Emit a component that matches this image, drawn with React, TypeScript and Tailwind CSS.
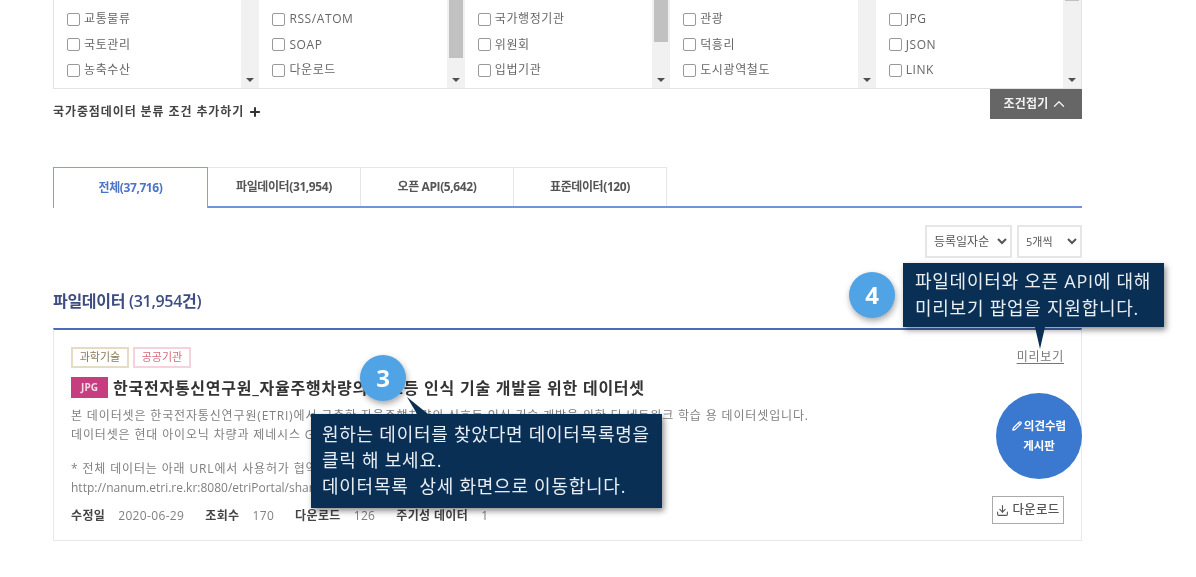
import { ChevronUp, Download, Pencil, Plus } from "lucide-react";

const filterColumns = [
  { items: ["교통물류", "국토관리", "농축수산"], thumb: "" },
  { items: ["RSS/ATOM", "SOAP", "다운로드"], thumb: "h-[58px]" },
  { items: ["국가행정기관", "위원회", "입법기관"], thumb: "h-[42px]" },
  { items: ["관광", "덕흥리", "도시광역철도"], thumb: "" },
  { items: ["JPG", "JSON", "LINK"], thumb: "h-[1px]" },
];

const tabs = ["파일데이터(31,954)", "오픈 API(5,642)", "표준데이터(120)"];

const FilterColumn = ({ items, thumb }: { items: string[]; thumb: string }) => (
  <div className="flex flex-1 h-full">
    <div className="flex-1 flex flex-col justify-end pl-[13px] pb-[5px] overflow-hidden">
      {["", ...items].map((item, i) => (
        <label key={i} className="flex items-center gap-[4px] h-[25.5px] shrink-0 text-[12px] tracking-[0.6px] text-[#666]">
          <span className="w-[13px] h-[13px] border border-[#999] rounded-[2px] bg-white shrink-0" />
          {item}
        </label>
      ))}
    </div>
    <div className="w-[18px] bg-[#f1f1f1] flex flex-col justify-between items-center">
      <div className={`w-[14px] bg-[#c1c1c1] ${thumb}`} />
      <div className="w-0 h-0 mb-[6px] border-x-[4px] border-x-transparent border-t-[4px] border-t-[#505050]" />
    </div>
  </div>
);

const Callout = ({ className, children }: { className: string; children: React.ReactNode }) => (
  <div className={`absolute bg-[#0a2f55] text-[#e8edf2] text-[18px] tracking-[0.75px] shadow-[2px_3px_6px_rgba(0,0,0,0.45)] ${className}`}>
    {children}
  </div>
);

const StepBadge = ({ className, step }: { className: string; step: string }) => (
  <div
    className={`absolute w-[46px] h-[46px] rounded-full bg-[#50a4e6] text-white text-[24px] font-bold flex items-center justify-center shadow-[1px_3px_6px_rgba(0,0,0,0.35)] ${className}`}
  >
    {step}
  </div>
);

export default function App() {
  return (
    <div className="relative w-[1196px] h-[577px] overflow-hidden bg-white blur-[0.5px] font-['Open_Sans','Noto_Sans_CJK_KR',sans-serif]">
      <div className="ml-[53px] w-[1029px]">
        <div className="flex h-[89px] overflow-hidden border-b border-x border-[#e3e3e3] border-t-0">
          {filterColumns.map((col) => (
            <FilterColumn key={col.items[0]} items={col.items} thumb={col.thumb} />
          ))}
        </div>

        <div className="flex items-start justify-between h-[78px]">
          <div className="flex items-center gap-[4px] mt-[14px] text-[12px] tracking-[0.9px] font-bold text-[#444]">
            국가중점데이터 분류 조건 추가하기
            <Plus size={14} strokeWidth={3.5} className="text-[#333]" />
          </div>
          <button className="w-[92px] h-[30px] bg-[#666666] text-[#f2f2f2] text-[12px] tracking-[0.2px] font-bold flex items-center justify-center gap-[2px]">
            조건접기
            <ChevronUp size={18} strokeWidth={1.75} />
          </button>
        </div>

        <div className="flex h-[41px] border-b-2 border-b-[#6f93e0]">
          <div className="relative w-[155px] h-[41px] bg-white border-x border-t border-[#7ea3dd] text-[#4a74c8] text-[12px] font-bold tracking-[-0.4px] flex items-center justify-center">
            전체(37,716)
          </div>
          {tabs.map((tab) => (
            <div
              key={tab}
              className="w-[153px] border-t border-r border-[#e6e6e6] text-[12px] font-bold tracking-[-0.4px] text-[#555] flex items-center justify-center"
            >
              {tab}
            </div>
          ))}
        </div>

        <div className="flex justify-end gap-[5px] mt-[17px]">
          <select className="w-[87px] h-[33px] border-2 border-[#e6e6e6] bg-white text-[12px] text-[#555] pl-[3px]">
            <option>등록일자순</option>
          </select>
          <select className="w-[65px] h-[33px] border-2 border-[#e6e6e6] bg-white text-[11px] text-[#555] pl-[3px]">
            <option>5개씩</option>
          </select>
        </div>

        <h2 className="mt-[32px] h-[22px] leading-[22px] text-[16px] font-semibold text-[#3d4d80] tracking-[-0.3px]">
          파일데이터 (31,954건)
        </h2>

        <div className="relative mt-[16px] h-[213px] border-t-2 border-t-[#4b6cb7] border-x border-b border-x-[#e8e8e8] border-b-[#e8e8e8] flex justify-between pl-[17px] pr-[17px]">
          <div className="flex flex-col">
            <div className="flex gap-[4px] mt-[17px]">
              <span className="w-[58px] h-[21px] border-2 border-[#e6dcc4] text-[#8a7a55] text-[11px] flex items-center justify-center">
                과학기술
              </span>
              <span className="w-[58px] h-[21px] border-2 border-[#f5d3da] text-[#d66a7c] text-[11px] flex items-center justify-center">
                공공기관
              </span>
            </div>
            <div className="flex items-center gap-[5px] mt-[9px] h-[21px]">
              <span className="w-[37px] h-[21px] bg-[#c63d80] text-[#f4d9e6] text-[10px] font-bold flex items-center justify-center">
                JPG
              </span>
              <span className="text-[16px] font-bold text-[#333] tracking-[0.75px] whitespace-nowrap">
                한국전자통신연구원_자율주행차량의 신호등 인식 기술 개발을 위한 데이터셋
              </span>
            </div>
            <div className="mt-[9px] text-[12px] tracking-[0.85px] leading-[18.5px] text-[#808080] whitespace-nowrap">
              <p>본 데이터셋은 한국전자통신연구원(ETRI)에서 구축한 자율주행차량의 신호등 인식 기술 개발을 위한 딥 네트워크 학습 용 데이터셋입니다.</p>
              <p>데이터셋은 현대 아이오닉 차량과 제네시스 G80 차량으로 수집한 도로 주행 영상으로 구성되어 있습니다.</p>
              <p className="h-[16px]" />
              <p>* 전체 데이터는 아래 URL에서 사용허가 협약 후 다운로드 할 수 있습니다.</p>
              <p className="tracking-[0px]">http://nanum.etri.re.kr:8080/etriPortal/share/</p>
            </div>
            <div className="flex items-center mt-[10px] text-[12px] tracking-[0.35px] text-[#808080]">
              <b className="text-[#444] mr-[13px]">수정일</b>
              <span className="mr-[21px]">2020-06-29</span>
              <b className="text-[#444] mr-[13px]">조회수</b>
              <span className="mr-[21px]">170</span>
              <b className="text-[#444] mr-[13px]">다운로드</b>
              <span className="mr-[21px]">126</span>
              <b className="text-[#444] mr-[13px]">주기성 데이터</b>
              <span>1</span>
            </div>
          </div>

          <div className="flex flex-col items-end justify-between pt-[18px] pb-[16px]">
            <a className="text-[12px] tracking-[0.8px] text-[#777] underline underline-offset-2">미리보기</a>
            <button className="w-[72px] h-[28px] border border-[#aaaaaa] bg-white text-[12.5px] tracking-[0.3px] text-[#555] font-medium flex items-center justify-center gap-[3px]">
              <Download size={13} strokeWidth={2} />
              다운로드
            </button>
          </div>

          <div className="absolute right-[-1px] top-[63px] w-[86px] h-[86px] rounded-full bg-[#3b78d0] text-white text-[11.5px] font-bold leading-[20px] flex flex-col items-center justify-center">
            <span className="flex items-center gap-[2px]">
              <Pencil size={10} strokeWidth={3} />
              의견수렴
            </span>
            <span>게시판</span>
          </div>
        </div>
      </div>

      <Callout className="left-[903px] top-[263px] w-[261px] h-[64px] pl-[12px] pt-[5px] leading-[27px]">
        <p>파일데이터와 오픈 API에 대해</p>
        <p>미리보기 팝업을 지원합니다.</p>
        <div className="absolute left-[132px] top-[64px] w-0 h-0 border-x-[5px] border-x-transparent border-t-[22px] border-t-[#0a2f55]" />
      </Callout>
      <StepBadge className="left-[849px] top-[272px]" step="4" />

      <Callout className="left-[311px] top-[414px] w-[351px] h-[94px] pl-[11px] pt-[7px] leading-[26px]">
        <svg className="absolute left-[94px] top-[-17px]" width="24" height="17" viewBox="0 0 24 17">
          <path d="M2 0 L12 17 L23 17 Z" fill="#0a2f55" />
        </svg>
        <p>원하는 데이터를 찾았다면 데이터목록명을</p>
        <p>클릭 해 보세요.</p>
        <p className="whitespace-pre">데이터목록  상세 화면으로 이동합니다.</p>
      </Callout>
      <StepBadge className="left-[360px] top-[355px]" step="3" />
    </div>
  );
}
